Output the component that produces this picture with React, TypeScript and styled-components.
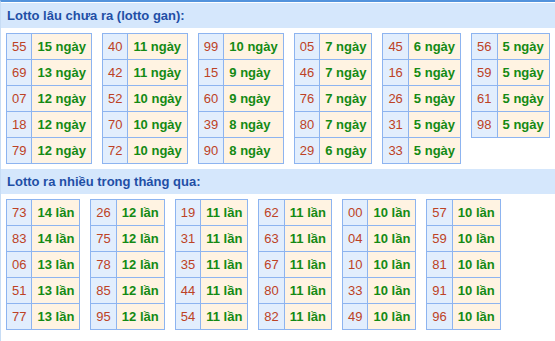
import React from 'react';
import styled, { createGlobalStyle } from 'styled-components';

const GlobalStyle = createGlobalStyle`
    html, body {
        margin: 0;
        padding: 0;
        background: #ffffff;
        overflow: hidden;
    }
    body {
        font-family: "Liberation Sans", Arial, sans-serif;
    }
`;

const Wrapper = styled.div`
    width: 570px;
    min-height: 341px;
    border-top: 2px solid #5393dc;
    border-left: 1px solid #c6dcf5;
    box-sizing: border-box;
`;

const Heading = styled.div<{ $first?: boolean }>`
    background-color: #d5e7fc;
    height: 25px;
    line-height: 25px;
    padding-left: 6px;
    font-size: 13px;
    font-weight: bold;
    color: #1f4fa6;
    margin-top: ${(p) => (p.$first ? '1px' : '5px')};
`;

const TableRow = styled.div`
    display: flex;
    align-items: flex-start;
    gap: 10px;
    padding: 5px 0 0 5px;
`;

const Table = styled.table`
    border-collapse: collapse;
    font-size: 13px;
`;

const NumCell = styled.td`
    background-color: #e2eefd;
    border: 1px solid #8db4f0;
    color: #bd4225;
    height: 25px;
    padding: 0 5px;
    text-align: center;
`;

const ValueCell = styled.td`
    background-color: #fff3e2;
    border: 1px solid #8db4f0;
    color: #148a14;
    font-weight: bold;
    height: 25px;
    padding: 0 5px;
    white-space: nowrap;
`;

type Entry = [string, number];

const ganTables: Entry[][] = [
    [['55', 15], ['69', 13], ['07', 12], ['18', 12], ['79', 12]],
    [['40', 11], ['42', 11], ['52', 10], ['70', 10], ['72', 10]],
    [['99', 10], ['15', 9], ['60', 9], ['39', 8], ['90', 8]],
    [['05', 7], ['46', 7], ['76', 7], ['80', 7], ['29', 6]],
    [['45', 6], ['16', 5], ['26', 5], ['31', 5], ['33', 5]],
    [['56', 5], ['59', 5], ['61', 5], ['98', 5]],
];

const hotTables: Entry[][] = [
    [['73', 14], ['83', 14], ['06', 13], ['51', 13], ['77', 13]],
    [['26', 12], ['75', 12], ['78', 12], ['85', 12], ['95', 12]],
    [['19', 11], ['31', 11], ['35', 11], ['44', 11], ['54', 11]],
    [['62', 11], ['63', 11], ['67', 11], ['80', 11], ['82', 11]],
    [['00', 10], ['04', 10], ['10', 10], ['33', 10], ['49', 10]],
    [['57', 10], ['59', 10], ['81', 10], ['91', 10], ['96', 10]],
];

const LottoTable = ({ rows, unit }: { rows: Entry[]; unit: string }) => (
    <Table>
        <tbody>
            {rows.map(([num, count]) => (
                <tr key={num}>
                    <NumCell>{num}</NumCell>
                    <ValueCell>{count} {unit}</ValueCell>
                </tr>
            ))}
        </tbody>
    </Table>
);

const App = () => {
    return (
        <>
            <GlobalStyle />
            <Wrapper>
                <Heading $first>Lotto lâu chưa ra (lotto gan):</Heading>
                <TableRow>
                    {ganTables.map((rows, i) => (
                        <LottoTable key={i} rows={rows} unit="ngày" />
                    ))}
                </TableRow>
                <Heading>Lotto ra nhiều trong tháng qua:</Heading>
                <TableRow>
                    {hotTables.map((rows, i) => (
                        <LottoTable key={i} rows={rows} unit="lần" />
                    ))}
                </TableRow>
            </Wrapper>
        </>
    );
};

export default App;
